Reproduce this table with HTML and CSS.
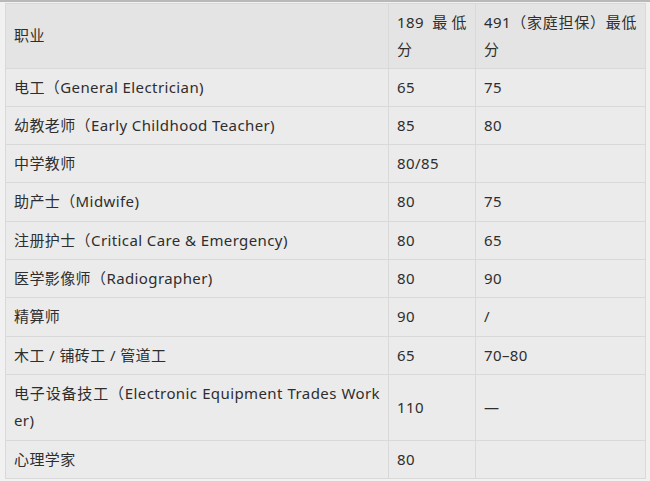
FILE: index.html
```html
<!DOCTYPE html>
<html lang="zh">
<head>
<meta charset="utf-8">
<link rel="stylesheet" href="styles.css">
</head>
<body>
<div class="frame">
<table class="scores">
  <colgroup>
    <col class="c1"><col class="c2"><col class="c3">
  </colgroup>
  <thead>
    <tr><th>职业</th><th>189 最低分</th><th>491（家庭担保）最低分</th></tr>
  </thead>
  <tbody>
    <tr><td>电工（General Electrician)</td><td>65</td><td>75</td></tr>
    <tr><td>幼教老师（Early Childhood Teacher)</td><td>85</td><td>80</td></tr>
    <tr><td>中学教师</td><td>80/85</td><td></td></tr>
    <tr><td>助产士（Midwife)</td><td>80</td><td>75</td></tr>
    <tr><td>注册护士（Critical Care &amp; Emergency)</td><td>80</td><td>65</td></tr>
    <tr><td>医学影像师（Radiographer)</td><td>80</td><td>90</td></tr>
    <tr><td>精算师</td><td>90</td><td>/</td></tr>
    <tr><td>木工 / 铺砖工 / 管道工</td><td>65</td><td>70–80</td></tr>
    <tr><td>电子设备技工（Electronic Equipment Trades Worker)</td><td>110</td><td>—</td></tr>
    <tr><td>心理学家</td><td>80</td><td></td></tr>
  </tbody>
</table>
</div>
</body>
</html>
```
FILE: styles.css
```css
html, body {
  margin: 0;
  padding: 0;
  background: #f1f1f1;
}
.frame {
  padding: 1px 5px 0 5px;
  border-top: 2px solid #b9b9b9;
  background: #f1f1f1;
}
.scores {
  width: 640px;
  border-collapse: collapse;
  table-layout: fixed;
  font-family: "Noto Sans", "Noto Sans CJK SC", sans-serif;
  font-size: 15px;
  letter-spacing: 0.4px;
  color: #2e2e2e;
  background: #ebebeb;
}
.c1 { width: 383px; }
.c2 { width: 87px; }
.c3 { width: 170px; }
.scores th, .scores td {
  border: 1px solid #d9d9d9;
  padding: 5px 8px 5px 8px;
  line-height: 27.3px;
  text-align: justify;
  word-break: break-all;
  font-weight: normal;
  vertical-align: middle;
}
.scores thead th {
  background: #e4e4e4;
  padding-top: 4.5px;
  padding-bottom: 4.5px;
}
```
